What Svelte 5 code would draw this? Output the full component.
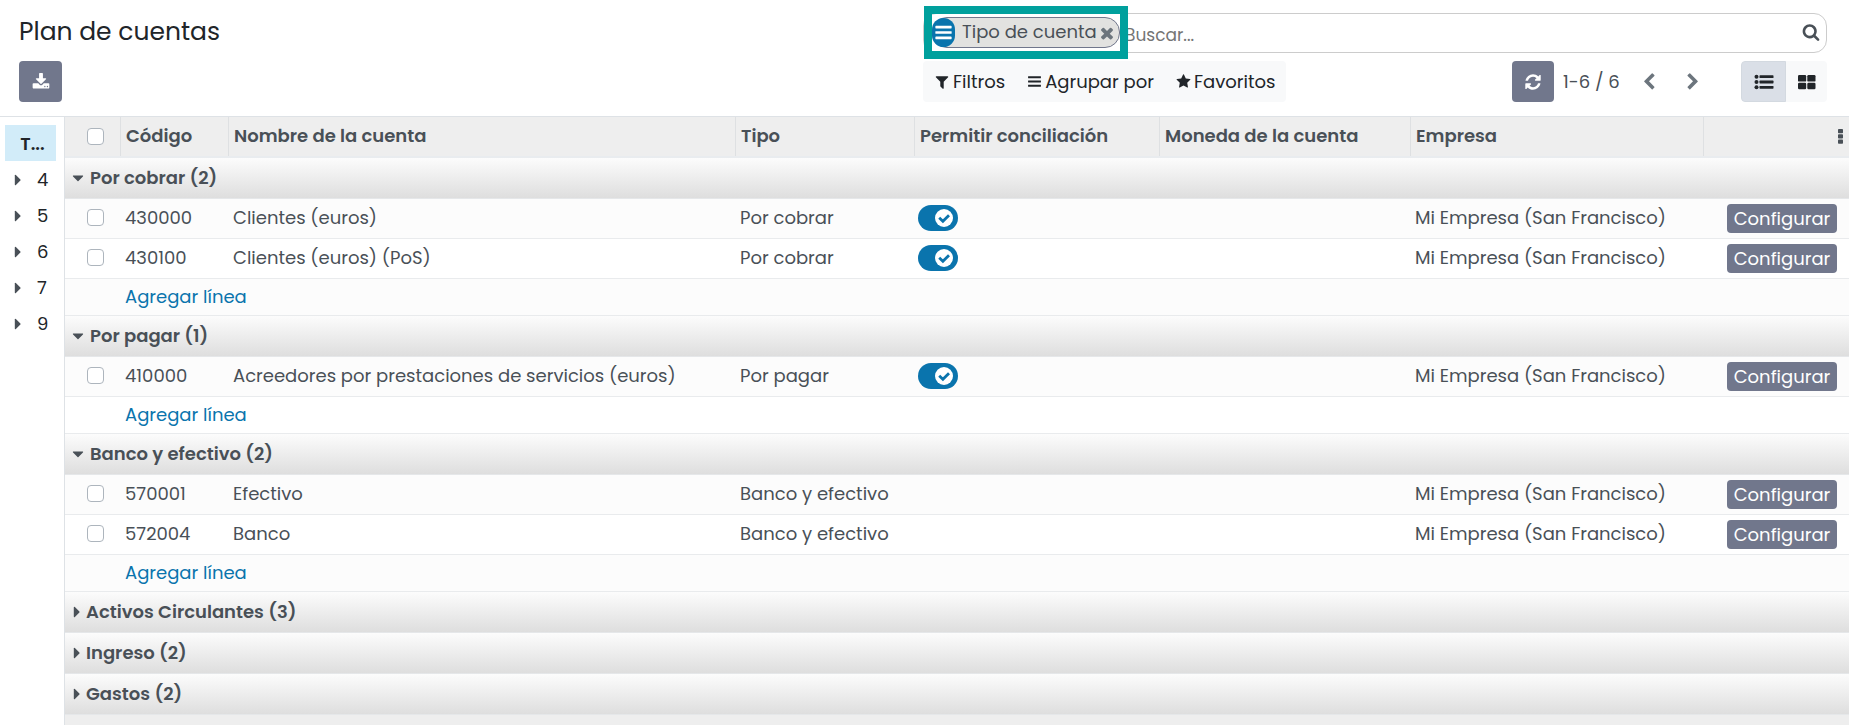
<script>
  const sections = ['4', '5', '6', '7', '9'];
  const columns = [
    { label: 'Código', cls: 'c-code' },
    { label: 'Nombre de la cuenta', cls: 'c-name' },
    { label: 'Tipo', cls: 'c-type' },
    { label: 'Permitir conciliación', cls: 'c-rec' },
    { label: 'Moneda de la cuenta', cls: 'c-cur' },
    { label: 'Empresa', cls: 'c-comp' },
  ];
  const company = 'Mi Empresa (San Francisco)';
  let groups = $state([
    {
      name: 'Por cobrar', count: 2, open: true,
      rows: [
        { code: '430000', name: 'Clientes (euros)', reconcile: true },
        { code: '430100', name: 'Clientes (euros) (PoS)', reconcile: true },
      ],
    },
    {
      name: 'Por pagar', count: 1, open: true,
      rows: [{ code: '410000', name: 'Acreedores por prestaciones de servicios (euros)', reconcile: true }],
    },
    {
      name: 'Banco y efectivo', count: 2, open: true,
      rows: [
        { code: '570001', name: 'Efectivo' },
        { code: '572004', name: 'Banco' },
      ],
    },
    { name: 'Activos Circulantes', count: 3, open: false, rows: [] },
    { name: 'Ingreso', count: 2, open: false, rows: [] },
    { name: 'Gastos', count: 2, open: false, rows: [] },
  ]);

  const icons = {
    download: 'M1344 1344q0-26-19-45t-45-19-45 19-19 45 19 45 45 19 45-19 19-45zm256 0q0-26-19-45t-45-19-45 19-19 45 19 45 45 19 45-19 19-45zm128-224v320q0 40-28 68t-68 28h-1472q-40 0-68-28t-28-68v-320q0-40 28-68t68-28h465l135 136q58 56 136 56t136-56l136-136h464q40 0 68 28t28 68zm-325-569q17 41-14 70l-448 448q-18 19-45 19t-45-19l-448-448q-31-29-14-70 17-39 59-39h256v-448q0-26 19-45t45-19h256q26 0 45 19t19 45v448h256q42 0 59 39z',
    refresh: 'M1639 1056q0 5-1 7-64 268-268 434.5t-478 166.5q-146 0-282.5-55t-243.5-157l-129 129q-19 19-45 19t-45-19-19-45v-448q0-26 19-45t45-19h448q26 0 45 19t19 45-19 45l-137 137q71 66 161 102t187 36q134 0 250-65t186-179q11-17 53-117 8-23 30-23h192q13 0 22.5 9.5t9.5 22.5zm25-800v448q0 26-19 45t-45 19h-448q-26 0-45-19t-19-45 19-45l138-138q-148-137-349-137-134 0-250 65t-186 179q-11 17-53 117-8 23-30 23h-199q-13 0-22.5-9.5t-9.5-22.5v-7q65-268 270-434.5t480-166.5q146 0 284 55.5t245 156.5l130-129q19-19 45-19t45 19 19 45z',
    search: 'M1216 832q0-185-131.5-316.5t-316.5-131.5-316.5 131.5-131.5 316.5 131.5 316.5 316.5 131.5 316.5-131.5 131.5-316.5zm512 832q0 52-38 90t-90 38q-54 0-90-38l-343-342q-179 124-399 124-143 0-273.5-55.5t-225-150-150-225-55.5-273.5 55.5-273.5 150-225 225-150 273.5-55.5 273.5 55.5 225 150 150 225 55.5 273.5q0 220-124 399l343 343q37 37 37 90z',
    filter: 'M1595 295q17 41-14 70l-493 493v742q0 42-39 59-13 5-25 5-27 0-45-19l-256-256q-19-19-19-45v-486l-493-493q-31-29-14-70 17-39 59-39h1280q42 0 59 39z',
    bars: 'M1664 1344v128q0 26-19 45t-45 19h-1408q-26 0-45-19t-19-45v-128q0-26 19-45t45-19h1408q26 0 45 19t19 45zm0-512v128q0 26-19 45t-45 19h-1408q-26 0-45-19t-19-45v-128q0-26 19-45t45-19h1408q26 0 45 19t19 45zm0-512v128q0 26-19 45t-45 19h-1408q-26 0-45-19t-19-45v-128q0-26 19-45t45-19h1408q26 0 45 19t19 45z',
    star: 'M1728 647q0 22-26 48l-363 354 86 500q1 7 1 20 0 21-10.5 35.5t-30.5 14.5q-19 0-40-12l-449-236-449 236q-22 12-40 12-21 0-31.5-14.5t-10.5-35.5q0-6 2-20l86-500-364-354q-25-27-25-48 0-37 56-46l502-73 225-455q19-41 49-41t49 41l225 455 502 73q56 9 56 46z',
    times: 'M1490 1322q0 40-28 68l-136 136q-28 28-68 28t-68-28l-294-294-294 294q-28 28-68 28t-68-28l-136-136q-28-28-28-68t28-68l294-294-294-294q-28-28-28-68t28-68l136-136q28-28 68-28t68 28l294 294 294-294q28-28 68-28t68 28l136 136q28 28 28 68t-28 68l-294 294 294 294q28 28 28 68z',
    left: 'M1427 301l-531 531 531 531q19 19 19 45t-19 45l-166 166q-19 19-45 19t-45-19l-742-742q-19-19-19-45t19-45l742-742q19-19 45-19t45 19l166 166q19 19 19 45t-19 45z',
    right: 'M1363 877l-742 742q-19 19-45 19t-45-19l-166-166q-19-19-19-45t19-45l531-531-531-531q-19-19-19-45t19-45l166-166q19-19 45-19t45 19l742 742q19 19 19 45t-19 45z',
    caretRight: 'M1152 896q0 26-19 45l-448 448q-19 19-45 19t-45-19-19-45v-896q0-26 19-45t45-19 45 19l448 448q19 19 19 45z',
    caretDown: 'M1408 704q0 26-19 45l-448 448q-19 19-45 19t-45-19l-448-448q-19-19-19-45t19-45 45-19h896q26 0 45 19t19 45z',
  };
</script>

{#snippet icon(name, size = 16)}
  <svg class="icon" width={size} height={size} viewBox="0 0 1792 1792" aria-hidden="true"><path d={icons[name]} /></svg>
{/snippet}

<div class="page">
  <header class="panel">
    <h1>Plan de cuentas</h1>
    <div class="search">
      <div class="facet-wrap">
        <div class="facet">
          <span class="facet-icon">{@render icon('bars', 19)}</span>
          <span class="facet-text">Tipo de cuenta</span>
          <button class="facet-x" aria-label="Quitar">{@render icon('times', 18)}</button>
        </div>
      </div>
      <input type="text" placeholder="Buscar..." aria-label="Buscar" />
      <button class="search-btn" aria-label="Buscar ahora">{@render icon('search', 18)}</button>
    </div>
    <div class="actions">
      <button class="solid square" aria-label="Exportar">{@render icon('download', 18)}</button>
    </div>
    <div class="tools">
      <div class="menus">
        <button>{@render icon('filter', 16)}Filtros</button>
        <button>{@render icon('bars', 15)}Agrupar por</button>
        <button>{@render icon('star', 15)}Favoritos</button>
      </div>
      <div class="right">
        <button class="solid square" aria-label="Actualizar">{@render icon('refresh', 18)}</button>
        <span class="pager">1-6 / 6</span>
        <button class="nav" aria-label="Anterior">{@render icon('left', 18)}</button>
        <button class="nav" aria-label="Siguiente">{@render icon('right', 18)}</button>
        <div class="views">
          <button class="active" aria-label="Lista">
            <svg width="20" height="16" viewBox="0 0 20 16" aria-hidden="true">
              <circle cx="2.5" cy="2.7" r="2" /><circle cx="2.5" cy="8" r="2" /><circle cx="2.5" cy="13.3" r="2" />
              <rect x="5.5" y="1.3" width="14" height="2.8" rx=".6" /><rect x="5.5" y="6.6" width="14" height="2.8" rx=".6" /><rect x="5.5" y="11.9" width="14" height="2.8" rx=".6" />
            </svg>
          </button>
          <button aria-label="Kanban">
            <svg width="18" height="16" viewBox="0 0 18 16" aria-hidden="true">
              <rect x="0" y="1" width="8.2" height="6.6" rx="1.2" /><rect x="9.3" y="1" width="8.2" height="6.6" rx="1.2" />
              <rect x="0" y="8.7" width="8.2" height="6.6" rx="1.2" /><rect x="9.3" y="8.7" width="8.2" height="6.6" rx="1.2" />
            </svg>
          </button>
        </div>
      </div>
    </div>
  </header>

  <div class="content">
    <nav class="side">
      <button class="all">T...</button>
      {#each sections as s}
        <button class="sec">{@render icon('caretRight', 18)}<span>{s}</span></button>
      {/each}
    </nav>

    <main>
      <table>
        <colgroup>
          <col class="c-check" />
          {#each columns as c}<col class={c.cls} />{/each}
          <col class="c-act" />
        </colgroup>
        <thead>
          <tr>
            <th class="check"><input type="checkbox" aria-label="Seleccionar todo" /></th>
            {#each columns as c}<th>{c.label}</th>{/each}
            <th class="opt">
              <button aria-label="Columnas opcionales">
                <svg width="5" height="15" viewBox="0 0 5 15" aria-hidden="true">
                  <rect x="0" y="0" width="5" height="4.2" rx=".8" /><rect x="0" y="5.3" width="5" height="4.2" rx=".8" /><rect x="0" y="10.6" width="5" height="4.2" rx=".8" />
                </svg>
              </button>
            </th>
          </tr>
        </thead>
        {#each groups as g}
          <tbody>
            <tr class="group">
              <th colspan="8">
                <button class:open={g.open} aria-expanded={g.open} onclick={() => (g.open = !g.open)}>
                  {@render icon(g.open ? 'caretDown' : 'caretRight', 18)}<span>{g.name} ({g.count})</span>
                </button>
              </th>
            </tr>
          </tbody>
          {#if g.open && g.rows.length}
            <tbody class="rows">
              {#each g.rows as r}
                <tr>
                  <td class="check"><input type="checkbox" aria-label={r.code} /></td>
                  <td>{r.code}</td>
                  <td>{r.name}</td>
                  <td>{g.name}</td>
                  <td>
                    {#if r.reconcile}
                      <label class="toggle">
                        <input type="checkbox" checked aria-label="Permitir conciliación" />
                        <svg width="18" height="18" viewBox="0 0 18 18" aria-hidden="true">
                          <circle cx="9" cy="9" r="9" />
                          <path d="M4.2 8.8 L7.9 12.3 L14 6.2" />
                        </svg>
                      </label>
                    {/if}
                  </td>
                  <td></td>
                  <td>{company}</td>
                  <td class="act"><button class="solid">Configurar</button></td>
                </tr>
              {/each}
              <tr class="add">
                <td></td>
                <td colspan="7"><a href="#agregar">Agregar línea</a></td>
              </tr>
            </tbody>
          {/if}
        {/each}
        <tfoot><tr><td colspan="8"></td></tr></tfoot>
      </table>
    </main>
  </div>
</div>

<style>
  :global(body) { margin: 0; background: #fff; }
  .page, .page :global(*) { box-sizing: border-box; }
  .page {
    display: flex;
    flex-direction: column;
    min-height: 100vh;
    font: 400 18px/26px Poppins, Inter, sans-serif;
    color: #495057;
  }
  button { font: inherit; color: inherit; border: 0; background: none; padding: 0; margin: 0; cursor: pointer; }
  svg { display: block; fill: currentColor; flex: none; }

  .panel {
    display: grid;
    grid-template-columns: 1fr 1fr;
    row-gap: 8px;
    padding: 13px 22px 14px 19px;
    border-bottom: 1px solid #dee2e6;
    color: #212529;
  }
  h1 { margin: 0; font-size: 25px; line-height: 38px; font-weight: 400; }
  .search {
    display: flex;
    align-items: center;
    height: 40px;
    padding: 0 6px 0 8px;
    border: 1px solid #ccc;
    border-radius: 13px;
  }
  .facet-wrap { position: relative; height: 31px; margin-bottom: 1px; }
  .facet-wrap::after {
    content: '';
    position: absolute;
    inset: -11px -8px -11px -8px;
    border: 8px solid #00a09d;
    pointer-events: none;
  }
  .facet {
    display: flex;
    align-items: center;
    height: 31px;
    min-width: 188px;
    border: 1px solid #71778c;
    border-radius: 15px;
    background: #e2e2e0;
    color: #495057;
    line-height: 24px;
  }
  .facet-icon {
    display: flex;
    align-items: center;
    justify-content: center;
    width: 23px;
    height: 29px;
    margin-left: -1px;
    border-radius: 12px;
    background: #0a74ad;
    color: #fff;
  }
  .facet-text { margin-left: 7px; padding-bottom: 2px; white-space: nowrap; }
  .facet-x { margin: 0 3px 0 auto; color: #6c757d; }
  .search input {
    flex: 1;
    min-width: 0;
    height: 32px;
    padding: 4px 0 0 5px;
    border: 0;
    outline: 0;
    background: transparent;
    font: inherit;
    font-size: 17px;
    color: #495057;
  }
  .search input::placeholder { color: #757575; opacity: 1; }
  .search-btn { margin-bottom: 2px; color: #495057; }

  .actions, .tools { display: flex; align-items: center; height: 41px; }
  .tools { justify-content: space-between; }
  .solid { background: #71778c; color: #fff; border-radius: 4px; }
  .square { display: flex; align-items: center; justify-content: center; width: 42px; height: 41px; }
  .actions .square { width: 43px; }
  .menus { display: flex; height: 41px; border-radius: 4px; background: #f8f9fa; }
  .menus button { display: flex; align-items: center; gap: 3px; padding: 0 11px; white-space: nowrap; }
  .right { display: flex; align-items: center; }
  .pager { width: 56px; margin: 0 8px 0 9px; color: #495057; white-space: nowrap; }
  .nav { display: flex; justify-content: center; width: 44px; color: #6c757d; }
  .views { display: flex; height: 41px; margin-left: 26px; border-radius: 4px; overflow: hidden; background: #f8f9fa; }
  .views button { display: flex; align-items: center; justify-content: center; width: 41px; }
  .views .active { width: 45px; border: 1px solid #d3d9e0; border-radius: 4px 0 0 4px; background: #dadfe7; }

  .content { display: flex; flex: 1; }
  .side { flex: 0 0 65px; padding: 8px 8px 0 5px; border-right: 1px solid #dee2e6; color: #212529; }
  .side button { display: flex; align-items: center; width: 100%; height: 36px; }
  .side .all { justify-content: center; margin-bottom: 1px; padding: 2px 0 0 4px; background: #d2ecf9; font-weight: 600; }
  .side .sec { padding: 0 0 0 4px; }
  .sec svg { color: #495057; }
  .sec span { margin-left: 10px; }

  main { flex: 1; min-width: 0; }
  table { width: 100%; table-layout: fixed; border-collapse: separate; border-spacing: 0; }
  .c-check { width: 56px; }
  .c-code { width: 108px; }
  .c-type { width: 179px; }
  .c-rec { width: 245px; }
  .c-cur { width: 251px; }
  .c-comp { width: 293px; }
  .c-act { width: 145px; }
  th, td { padding: 0 4px; text-align: left; white-space: nowrap; }
  thead th {
    height: 41px;
    padding: 0 5px 1px;
    border-bottom: 2px solid #e9ecef;
    background: linear-gradient(#dee0e2, #dee0e2) right / 1px 100% no-repeat #eee;
    font-weight: 600;
  }
  thead th.opt { background: #eee; }
  .opt button { display: block; margin: 0 1px 0 auto; }
  .check { text-align: center; padding: 0 0 0 5px; }
  .check input {
    display: block;
    appearance: none;
    width: 17px;
    height: 17px;
    margin: 0 auto;
    border: 1px solid #adb5bd;
    border-radius: 4px;
    background: #fff;
  }
  .group th { height: 41px; padding: 0; border-bottom: 1px solid #e5e7e9; background: linear-gradient(#fcfcfc, #dedede); }
  .group button { display: flex; align-items: center; width: 100%; padding-left: 3px; font-weight: 600; }
  .group button.open { padding-left: 4px; }
  .group button.open span { margin-left: 3px; }
  .rows td { height: 40px; padding-bottom: 2px; border-bottom: 1px solid #e9ebed; }
  .rows tr:nth-child(odd) td { background: #fcfcfc; }
  .rows tr.add td { height: 37px; padding-bottom: 0; }
  .add a { color: #0a74ad; text-decoration: none; }
  .act { text-align: right; }
  .rows .act { padding: 0 12px 0 0; }
  .act .solid { display: block; width: 110px; height: 29px; margin-left: auto; line-height: 28px; }
  .toggle {
    position: relative;
    display: flex;
    align-items: center;
    justify-content: flex-end;
    width: 40px;
    height: 26px;
    margin-left: -1px;
    padding-right: 5px;
    border-radius: 13px;
    background: #0a74ad;
    cursor: pointer;
  }
  .toggle input { position: absolute; inset: 0; margin: 0; opacity: 0; }
  .toggle circle { fill: #fff; }
  .toggle path { fill: none; stroke: #0a74ad; stroke-width: 2.8; }
  tfoot td { height: 10px; padding: 0; background: #eee; }
</style>
